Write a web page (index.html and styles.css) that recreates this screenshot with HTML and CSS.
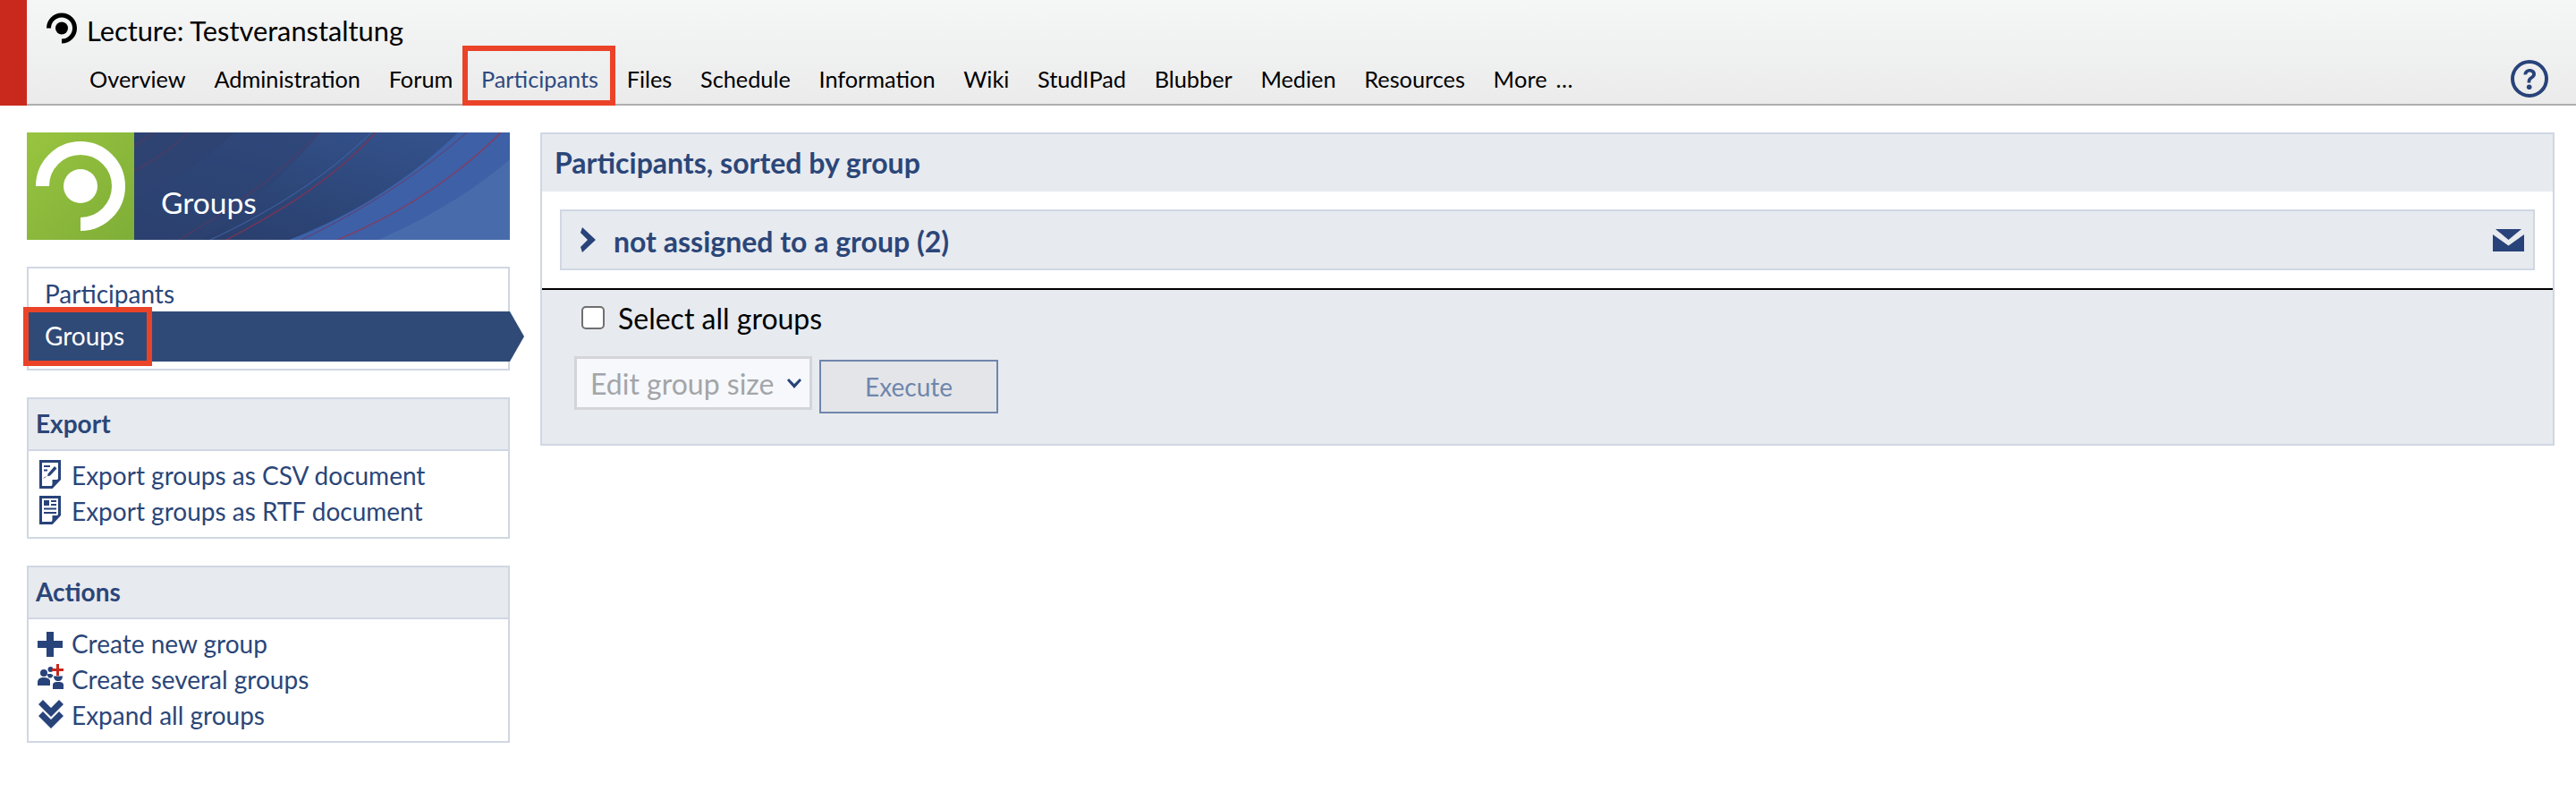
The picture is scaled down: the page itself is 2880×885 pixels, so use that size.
FILE: index.html
```html
<!DOCTYPE html>
<html lang="en">
<head>
<meta charset="utf-8">
<title>Groups</title>
<link rel="stylesheet" href="styles.css">
</head>
<body>
<header class="topbar">
  <div class="accent"></div>
  <div class="head-main">
    <div class="title-row">
      <svg class="logo-small" viewBox="0 0 36 38"><path d="M3.5 18.5A14.5 14.5 0 1 1 18 33" fill="none" stroke="#000" stroke-width="5"/><circle cx="18" cy="18.5" r="7" fill="#000"/></svg>
      <h1 class="course-title">Lecture: Testveranstaltung</h1>
    </div>
    <div class="nav-row">
      <nav class="tabs">
        <a class="tab">Overview</a>
        <a class="tab">Administration</a>
        <a class="tab">Forum</a>
        <a class="tab tab-current">Participants</a>
        <a class="tab">Files</a>
        <a class="tab">Schedule</a>
        <a class="tab">Information</a>
        <a class="tab">Wiki</a>
        <a class="tab">StudIPad</a>
        <a class="tab">Blubber</a>
        <a class="tab">Medien</a>
        <a class="tab">Resources</a>
        <a class="tab tab-more">More …</a>
      </nav>
      <svg class="help" viewBox="0 0 42 42"><circle cx="21" cy="21" r="19" fill="none" stroke="#28437a" stroke-width="4"/><path d="M14.5 16.5c0-4 3-6.5 6.8-6.5 3.900 0 6.700 2.300 6.700 5.700 0 2.600-1.500 4-3.300 5.200-1.700 1.100-2.400 1.900-2.400 3.800v.8h-3.700v-1.200c0-2.800 1.100-4.200 3-5.500 1.500-1 2.500-1.700 2.500-3 0-1.400-1.200-2.400-2.800-2.400-1.800 0-3 1.100-3.100 2.900z" fill="#28437a"/><circle cx="20.700" cy="30.300" r="2.800" fill="#28437a"/></svg>
    </div>
  </div>
</header>

<div class="content">
  <aside class="sidebar">
    <div class="banner">
      <div class="banner-logo">
        <svg class="banner-logo-svg" viewBox="0 0 120 120"><path d="M17.500 60A42.500 42.500 0 1 1 60 102.500" fill="none" stroke="#fff" stroke-width="15"/><circle cx="60" cy="60" r="19" fill="#fff"/></svg>
      </div>
      <div class="banner-art">
        <svg class="banner-svg" viewBox="0 0 420 120" preserveAspectRatio="none">
          <defs>
            <linearGradient id="bg" x1="0" y1="1" x2="1" y2="0">
              <stop offset="0" stop-color="#293c69"/>
              <stop offset="0.45" stop-color="#2d4779"/>
              <stop offset="1" stop-color="#365490"/>
            </linearGradient>
          </defs>
          <rect width="420" height="120" fill="url(#bg)"/>
          <path d="M0 0H112C80 30 40 55 0 75Z" fill="#2e4371"/>
          <path d="M112 0H208C170 45 130 85 75 120H0L0 75C40 55 80 30 112 0Z" fill="#2d4473" opacity=".55"/>
          <path d="M362 0H420V120H173C250 90 310 50 362 0Z" fill="#3e60a6"/>
          <path d="M420 30V120H273C330 95 380 65 420 30Z" fill="#486cab"/>
          <g fill="none" stroke="#6c3358">
            <path d="M103 120C170 85 225 50 270 0" stroke-width="1.300" stroke="#7a3456"/>
            <path d="M227 120C300 90 360 50 410 0" stroke-width="1.300" stroke="#8a3a5c"/>
            <path d="M187 120C260 85 320 45 372 0" stroke-width=".8"/>
            <path d="M50 120C110 85 165 45 207 0" stroke-width=".8"/>
            <path d="M0 43C25 30 45 15 60 0" stroke-width=".8"/>
            <path d="M0 15C8 10 15 5 21 0" stroke-width=".8"/>
          </g>
          <path d="M85 120C150 90 215 50 265 0" fill="none" stroke="#4468ab" stroke-width=".9"/>
        </svg>
        <span class="banner-title">Groups</span>
      </div>
    </div>

    <nav class="side-nav">
      <a class="side-link">Participants</a>
      <a class="side-link side-link-active"><span class="side-label">Groups</span></a>
    </nav>

    <section class="widget">
      <h2 class="widget-head">Export</h2>
      <ul class="widget-list">
        <li class="widget-item">
          <svg class="icon icon-doc" viewBox="0 0 24 32"><path d="M1.500 1.500H22.500V21.500L14 30.500H1.500Z" fill="none" stroke="#28437a" stroke-width="3"/><path d="M22 22H14.500V30Z" fill="#28437a"/><path d="M5 6h7v2H5zM5 10.500h4v2H5z" fill="#28437a"/><path d="M17 7l2.500 2.500-7.500 8-3 .8.800-3z" fill="#28437a"/><path d="M5 20.500l2-2" stroke="#28437a"/></svg>
          <span class="item-text">Export groups as CSV document</span>
        </li>
        <li class="widget-item">
          <svg class="icon icon-doc" viewBox="0 0 24 32"><path d="M1.500 1.500H22.500V21.500L14 30.500H1.500Z" fill="none" stroke="#28437a" stroke-width="3"/><path d="M22 22H14.500V30Z" fill="#28437a"/><path d="M5 5h6v6H5zM13 5h6v2h-6zM13 9h6v2h-6zM5 13.500h14v2H5zM5 18h14v2H5z" fill="#28437a"/></svg>
          <span class="item-text">Export groups as RTF document</span>
        </li>
      </ul>
    </section>

    <section class="widget">
      <h2 class="widget-head">Actions</h2>
      <ul class="widget-list">
        <li class="widget-item">
          <svg class="icon icon-plus" viewBox="0 0 28 28"><path d="M10 0h8v10h10v8H18v10h-8V18H0v-8h10z" fill="#28437a"/></svg>
          <span class="item-text">Create new group</span>
        </li>
        <li class="widget-item">
          <svg class="icon icon-people" viewBox="0 2 30 32"><circle cx="7" cy="12" r="4" fill="#28437a"/><circle cx="14.500" cy="8" r="3" fill="#28437a"/><path d="M0 26v-3.500C0 18.500 3 17 7 17s6 1.500 7 3.500V26z" fill="#28437a"/><path d="M10.500 14c1-1.500 6-1.500 7 1l-2 2.500h-3z" fill="#28437a"/><path d="M18 15.500h10c0 3.500-2 5.500-5 5.500s-5-2-5-5.500z" fill="#28437a"/><path d="M17 30v-5c0-2 2-3 6-3s6 1 6 3v5z" fill="#28437a"/><path d="M21 2h3v5h5v3h-5v5h-3v-5h-5V7h5z" fill="#c8281c"/></svg>
          <span class="item-text">Create several groups</span>
        </li>
        <li class="widget-item">
          <svg class="icon icon-expand" viewBox="0 2 30 36"><path d="M1 7l5-5 9 9 9-9 5 5-14 14z" fill="#28437a"/><path d="M1 20l5-5 9 9 9-9 5 5-14 14z" fill="#28437a"/></svg>
          <span class="item-text">Expand all groups</span>
        </li>
      </ul>
    </section>
  </aside>

  <main class="main">
    <h2 class="main-head">Participants, sorted by group</h2>
    <div class="main-body">
      <div class="group-row">
        <svg class="chevron" viewBox="0 0 18 28"><path d="M2 0l15 14L2 28l-2-6 8-8-8-8z" fill="#28437a"/></svg>
        <span class="group-title">not assigned to a group (2)</span>
        <svg class="mail" viewBox="0 0 35 25"><path d="M0 6L17.500 18.500 35 6V25H0Z" fill="#28437a"/><path d="M3 0H32L17.500 12Z" fill="#28437a"/></svg>
      </div>
    </div>
    <div class="main-foot">
      <label class="select-all"><input class="check" type="checkbox"><span>Select all groups</span></label>
      <div class="foot-actions">
        <div class="select-wrap">
          <select class="select" disabled><option>Edit group size</option></select>
          <svg class="select-arrow" viewBox="0 0 16 11"><path d="M0 2l2-2 6 6 6-6 2 2-8 9z" fill="#28437a"/></svg>
        </div>
        <button class="btn" type="button" disabled>Execute</button>
      </div>
    </div>
  </main>
</div>
</body>
</html>
```
FILE: styles.css
```css
*, *::before, *::after { box-sizing: border-box; }
html, body { margin: 0; padding: 0; background: #fff; }
body { font-family: Lato, "Open Sans", sans-serif; color: #000; font-size: 28px; height: 885px; overflow: hidden; font-variant-ligatures: common-ligatures; }
h1, h2 { margin: 0; }
ul { list-style: none; margin: 0; padding: 0; }

.topbar { display: flex; height: 118px; }
.accent { width: 30px; background: #c9291c; }
.head-main { flex: 1; display: flex; flex-direction: column; background: linear-gradient(#f5f6f6, #ebebeb); border-bottom: 2px solid #aeaeb0; }
.title-row { display: flex; align-items: flex-start; height: 60px; padding: 13px 0 0 21px; }
.logo-small { width: 36px; height: 38px; flex: none; }
.course-title { font-size: 30.8px; font-weight: 400; line-height: 40px; margin: 2px 0 0 10px; }
.nav-row { flex: 1; display: flex; justify-content: space-between; align-items: center; }
.tabs { display: flex; gap: 31.7px; padding-left: 70px; height: 100%; align-items: center; font-size: 25.3px; }
.tab { position: relative; color: #000; white-space: nowrap; }
.tab-more { word-spacing: 3px; letter-spacing: .2px; }
.tab-current { color: #2e4a80; }
.tab-current::after { content: ""; position: absolute; left: -21px; right: -19px; top: -22px; height: 67px; border: 6px solid #ea4328; }
.help { width: 42px; height: 42px; margin-right: 31px; }

.content { display: flex; gap: 34px; padding: 30px 24px 0 30px; }
.sidebar { width: 540px; flex: none; display: flex; flex-direction: column; gap: 30px; }

.banner { display: flex; height: 120px; }
.banner-logo { width: 120px; background: linear-gradient(135deg, #98c43f, #7fae38); }
.banner-logo-svg { display: block; width: 120px; height: 120px; }
.banner-art { position: relative; flex: 1; }
.banner-svg { display: block; width: 420px; height: 120px; }
.banner-title { position: absolute; left: 30px; bottom: 20px; color: #fff; font-size: 33.6px; line-height: 44px; }

.side-nav { display: flex; flex-direction: column; height: 116px; border: 2px solid #d0d7e3; }
.side-link { display: block; height: 48px; line-height: 56px; padding-left: 18px; color: #2b4678; }
.side-link-active { position: relative; height: 56px; line-height: 54px; margin-right: -2px; background: #304a78; color: #fff; }
.side-link-active::after { content: ""; position: absolute; left: 100%; top: 0; border-left: 16px solid #304a78; border-top: 28px solid transparent; border-bottom: 28px solid transparent; }
.side-label { position: relative; display: block; }
.side-label::after { content: ""; position: absolute; left: -24px; top: -5px; width: 144px; height: 66px; border: 6px solid #ea4328; }

.widget { border: 2px solid #d0d7e3; }
.widget-head { height: 58px; line-height: 55px; padding-left: 8px; background: #e7eaef; border-bottom: 2px solid #d0d7e3; color: #2b4678; font-size: 28px; font-weight: 700; }
.widget-list { padding: 7px 0 9px; }
.widget-item { display: flex; align-items: center; height: 40px; color: #2b4678; }
.icon { flex: none; display: block; }
.icon-doc { width: 24px; height: 32px; margin: -2px 12px 0; }
.icon-plus { width: 28px; height: 28px; margin: 2px 10px 0; }
.icon-people { width: 30px; height: 32px; margin: -2px 8px 0 10px; }
.icon-expand { width: 30px; height: 36px; margin: 2px 8px 0 10px; }
.item-text { white-space: nowrap; }

.main { flex: 1; height: 350px; border: 2px solid #d0d7e3; display: flex; flex-direction: column; }
.main-head { height: 64px; line-height: 64px; padding-left: 14px; background: #e7eaef; color: #2b4678; font-size: 32px; font-weight: 700; }
.main-body { padding: 20px 20px; background: #fff; border-bottom: 2px solid #000; }
.group-row { display: flex; align-items: center; height: 68px; padding: 0 10px 0 21px; background: #e7eaef; border: 2px solid #d0d7e3; }
.chevron { width: 18px; height: 28px; flex: none; }
.group-title { flex: 1; margin-left: 19px; padding-top: 2px; color: #2b4678; font-size: 32px; font-weight: 700; }
.mail { width: 35px; height: 25px; flex: none; }

.main-foot { flex: 1; background: #e7eaef; padding: 18px 0 0 44px; }
.select-all { display: flex; align-items: center; height: 26px; font-size: 32px; }
.check { appearance: none; width: 26px; height: 26px; margin: 0 15px 0 0; flex: none; background: #fff; border: 2px solid #6f6f6f; border-radius: 5px; }
.foot-actions { display: flex; align-items: flex-start; gap: 8px; margin: 30px 0 0 -8px; }
.select-wrap { position: relative; width: 266px; height: 60px; }
.select { appearance: none; width: 100%; height: 100%; padding: 0 0 0 15px; font: 32px Lato, sans-serif; color: #a3a5a8; background: #f6f8fb; border: 3px solid #d3d5d8; border-radius: 0; opacity: 1; }
.select-arrow { position: absolute; right: 12px; top: 25px; width: 16px; height: 11px; }
.btn { width: 200px; height: 60px; margin-top: 4px; font: 28px Lato, sans-serif; color: #6f86ac; background: #e4e5e8; border: 2px solid #6f86ac; border-radius: 0; padding: 0; }
```
